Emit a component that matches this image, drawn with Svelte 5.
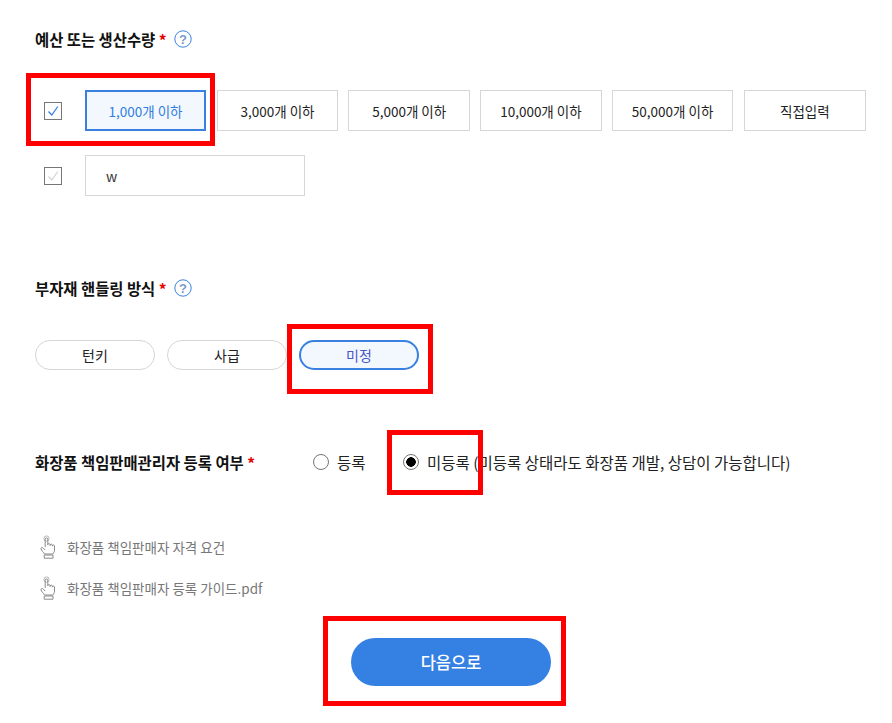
<script>
	const quantities = ['1,000개 이하', '3,000개 이하', '5,000개 이하', '10,000개 이하', '50,000개 이하', '직접입력'];
	const handling = ['턴키', '사급', '미정'];
	const links = ['화장품 책임판매자 자격 요건', '화장품 책임판매자 등록 가이드.pdf'];
</script>

{#snippet help()}
	<svg class="help" width="18" height="18" viewBox="0 0 18 18">
		<circle cx="9" cy="9" r="8.2" fill="none" stroke="#3b82e0" stroke-width="1" />
		<text x="9" y="13.5" text-anchor="middle" font-size="13" fill="#7d9bc9">?</text>
	</svg>
{/snippet}

{#snippet check(color)}
	<span class="check">
		<svg width="16" height="16" viewBox="0 0 16 16">
			<path d="M3.5 8.5 L6.8 12 L12.8 3.5" fill="none" stroke={color} stroke-width="1.2" />
		</svg>
	</span>
{/snippet}

{#snippet hand()}
	<svg class="hand" width="16" height="24" viewBox="0 0 16 24" fill="none" stroke="#8a8a8a" stroke-width="1">
		<circle cx="6.5" cy="3.5" r="2.6" stroke="#b5b5b5" />
		<path d="M5.2 12 V4.2 a1.3 1.3 0 0 1 2.6 0 V10 M7.8 9.5 a1.2 1.2 0 0 1 2.3 0 V11 M10.1 10 a1.2 1.2 0 0 1 2.3 0 V11.2 M12.4 10.8 a1.1 1.1 0 0 1 2.1 0 V15 c0 1.8 -1 3 -1.6 4 H4.6 C3.6 17.5 1.2 15.5 1 13.6 c0 -1.2 1.4 -1.4 2.2 -.6 L5.2 15" />
		<path d="M4.2 20 H13 V23.2 H4.2 Z" />
	</svg>
{/snippet}

<div class="page">
	<section class="budget">
		<h2>예산 또는 생산수량 <span class="req">*</span>{@render help()}</h2>
		<div class="row first">
			{@render check('#2f7de1')}
			<div class="options">
				{#each quantities as q, i}
					<button class="opt" class:on={i === 0}>{q}</button>
				{/each}
			</div>
		</div>
		<div class="row second">
			{@render check('#d4d4d4')}
			<div class="input">w</div>
		</div>
	</section>

	<section class="handling">
		<h2>부자재 핸들링 방식 <span class="req">*</span>{@render help()}</h2>
		<div class="pills">
			{#each handling as h, i}
				<button class="pill" class:on={i === 2}>{h}</button>
			{/each}
		</div>
	</section>

	<section class="manager">
		<h2>화장품 책임판매관리자 등록 여부 <span class="req">*</span></h2>
		<label class="radio"><span class="dot"></span>등록</label>
		<label class="radio sel"><span class="dot"></span>미등록 (미등록 상태라도 화장품 개발, 상담이 가능합니다)</label>
	</section>

	<ul class="links">
		{#each links as l}
			<li>{@render hand()}<span>{l}</span></li>
		{/each}
	</ul>

	<div class="next-wrap"><button class="next">다음으로</button></div>

	<!-- annotation boxes on top of the capture -->
	<div class="mark m1"></div>
	<div class="mark m2"></div>
	<div class="mark m3"></div>
	<div class="mark m4"></div>
</div>

<style>
	:global(body) {
		background: #fff;
	}

	.page {
		position: relative;
		width: 892px;
		height: 723px;
		overflow: hidden;
		box-sizing: border-box;
		padding: 29px 0 0 35px;
		font-family: "Noto Sans CJK KR", "Noto Sans", sans-serif;
		font-size: 14px;
		color: #222;
	}

	h2 {
		display: flex;
		align-items: center;
		margin: 0;
		font-size: 15.4px;
		font-weight: 700;
		line-height: 20px;
		color: #111;
		white-space: pre;
	}

	.req {
		color: #e60000;
		margin-right: 7px;
	}

	.help text {
		font-family: "Liberation Sans", sans-serif;
	}

	.row {
		display: flex;
		align-items: center;
	}

	.first {
		margin-top: 41px;
		margin-left: 9px;
	}

	.second {
		margin-top: 24px;
		margin-left: 9px;
	}

	.check {
		display: flex;
		align-items: center;
		justify-content: center;
		box-sizing: border-box;
		width: 18px;
		height: 18px;
		margin-right: 23px;
		border: 1px solid #767676;
	}

	.options {
		display: flex;
		gap: 10px;
	}

	.opt {
		box-sizing: border-box;
		width: 121.7px;
		height: 41px;
		padding: 0;
		background: #fff;
		border: 1px solid #d6d6d6;
		font: inherit;
		font-size: 13.5px;
		color: #222;
	}

	.opt:last-child {
		margin-left: 0.6px;
	}

	.opt.on {
		width: 121px;
		margin-right: 0.7px;
		background: #f3f8fe;
		border: 2px solid #3a80e0;
		color: #2f7de1;
	}

	.input {
		box-sizing: border-box;
		width: 220px;
		height: 41px;
		padding-left: 20px;
		border: 1px solid #d6d6d6;
		line-height: 41px;
		color: #333;
	}

	.handling {
		margin-top: 82px;
	}

	.pills {
		display: flex;
		gap: 12px;
		margin-top: 42px;
	}

	.pill {
		box-sizing: border-box;
		width: 120px;
		height: 30px;
		padding: 0;
		background: #fff;
		border: 1px solid #d6d6d6;
		border-radius: 15px;
		font: inherit;
		color: #222;
	}

	.pill.on {
		background: #f3f8fe;
		border: 2px solid #3a80e0;
		color: #4a55c8;
	}

	.manager {
		display: flex;
		align-items: center;
		margin-top: 82px;
	}

	.manager h2 {
		width: 278px;
	}

	.radio {
		display: flex;
		align-items: center;
		font-size: 15.5px;
		line-height: 20px;
		color: #222;
	}

	.dot {
		box-sizing: border-box;
		width: 16px;
		height: 16px;
		margin-right: 8px;
		border: 1px solid #767676;
		border-radius: 50%;
	}

	.radio:first-of-type {
		width: 90px;
	}

	.sel .dot {
		background: radial-gradient(circle, #000 0 4.5px, #fff 5px);
	}

	.links {
		list-style: none;
		margin: 63px 0 0;
		padding: 0;
		color: #777;
		font-size: 13.5px;
	}

	.links li {
		display: flex;
		align-items: center;
		height: 24px;
		margin-bottom: 17px;
	}

	.hand {
		margin-left: 5px;
		margin-right: 11px;
	}

	.next-wrap {
		display: flex;
		justify-content: center;
		width: 832px;
		margin-top: 38px;
	}

	.next {
		width: 200px;
		height: 48px;
		background: #3580e3;
		border: 0;
		border-radius: 24px;
		font: inherit;
		font-size: 16.5px;
		font-weight: 500;
		color: #fff;
	}

	.mark {
		position: absolute;
		box-sizing: border-box;
		border: 5px solid #ff0000;
	}

	.m1 {
		left: 26px;
		top: 73px;
		width: 189px;
		height: 73px;
	}

	.m2 {
		left: 287px;
		top: 324px;
		width: 146px;
		height: 70px;
	}

	.m3 {
		left: 387px;
		top: 430px;
		width: 96px;
		height: 65px;
	}

	.m4 {
		left: 323px;
		top: 616px;
		width: 243px;
		height: 90px;
	}
</style>
